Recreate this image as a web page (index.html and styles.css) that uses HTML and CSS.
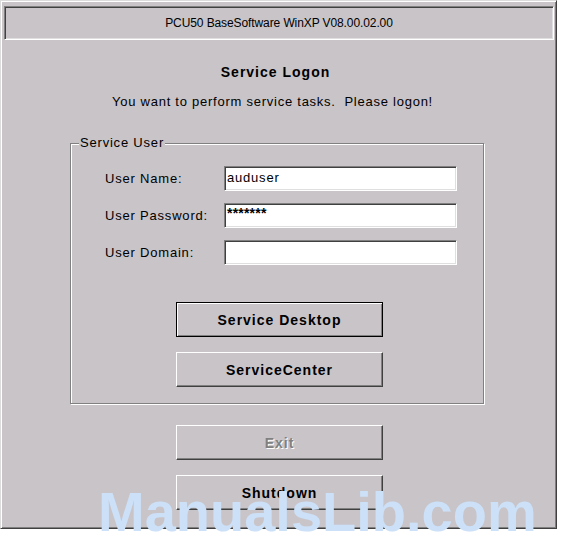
FILE: index.html
```html
<!DOCTYPE html>
<html>
<head>
<meta charset="utf-8">
<link rel="stylesheet" href="styles.css">
</head>
<body>
<div class="window">
  <div class="titlebar">PCU50 BaseSoftware WinXP V08.00.02.00</div>
  <div class="heading">Service Logon</div>
  <div class="subtitle">You want to perform service tasks.&nbsp; Please logon!</div>
  <div class="group">
    <span class="legend">Service User</span>
    <div class="fields">
      <div class="row"><span class="label">User Name:</span><div class="field">auduser</div></div>
      <div class="row"><span class="label">User Password:</span><div class="field pw">*******</div></div>
      <div class="row"><span class="label">User Domain:</span><div class="field"></div></div>
    </div>
    <div class="btn default first">Service Desktop</div>
    <div class="btn second">ServiceCenter</div>
  </div>
  <div class="btn outer-btn exit disabled">Exit</div>
  <div class="btn outer-btn shutdown">Shutdown</div>
</div>
<div class="watermark">ManualsLib.com</div>
</body>
</html>
```
FILE: styles.css
```css
html, body {
  margin: 0;
  padding: 0;
  background: #ffffff;
  overflow: hidden;
  height: 535px;
}
body {
  position: relative;
  font-family: "Liberation Sans", Arial, sans-serif;
  color: #000;
}
.window {
  box-sizing: border-box;
  width: 557px;
  height: 529px;
  background: #c8c4c8;
  border: 1px solid;
  border-color: #dcdcdc #404040 #404040 #dcdcdc;
  box-shadow: inset 1px 1px 0 #ffffff, inset -1px -1px 0 #808080;
  display: flex;
  flex-direction: column;
  align-items: flex-start;
  padding: 1px;
}
.titlebar {
  box-sizing: border-box;
  width: 550px;
  height: 34px;
  margin: 4px 0 0 2px;
  border: 1px solid;
  border-color: #808080 #ffffff #ffffff #808080;
  box-shadow: inset 1px 1px 0 #404040, inset -1px -1px 0 #dfdfdf;
  display: flex;
  align-items: center;
  justify-content: center;
  font-size: 12px;
  letter-spacing: -0.1px;
}
.heading {
  align-self: stretch;
  text-align: center;
  font-weight: bold;
  font-size: 14px;
  letter-spacing: 1px;
  line-height: 16px;
  margin-top: 24px;
  padding-right: 6px;
}
.subtitle {
  align-self: stretch;
  text-align: center;
  font-size: 13px;
  letter-spacing: 0.75px;
  line-height: 16px;
  margin-top: 14px;
  padding-right: 12px;
}
.group {
  box-sizing: border-box;
  width: 414px;
  height: 261px;
  margin: 33px 0 0 68px;
  border: 1px solid #808080;
  box-shadow: 1px 1px 0 #ffffff, inset 1px 1px 0 #ffffff;
  display: flex;
  flex-direction: column;
  align-items: flex-start;
}
.legend {
  font-size: 13px;
  letter-spacing: 0.8px;
  line-height: 16px;
  background: #c8c4c8;
  padding: 0 1px;
  margin: -9px 0 0 8px;
  height: 16px;
}
.fields {
  display: flex;
  flex-direction: column;
  gap: 12px;
  margin-top: 15px;
  padding-left: 34px;
}
.row {
  display: flex;
  align-items: center;
  height: 25px;
}
.label {
  width: 119px;
  font-size: 13px;
  letter-spacing: 0.8px;
}
.field {
  box-sizing: border-box;
  width: 233px;
  height: 25px;
  background: #ffffff;
  border: 1px solid;
  border-color: #808080 #ffffff #ffffff #808080;
  box-shadow: inset 1px 1px 0 #404040, inset -1px -1px 0 #dfdfdf;
  font-size: 13px;
  letter-spacing: 0.8px;
  line-height: 21px;
  padding-left: 2px;
}
.field.pw {
  font-weight: bold;
  font-size: 14px;
  line-height: 18px;
  letter-spacing: 0.2px;
}
.btn {
  box-sizing: border-box;
  width: 207px;
  height: 35px;
  border: 1px solid;
  border-color: #ffffff #404040 #404040 #ffffff;
  box-shadow: inset -1px -1px 0 #808080;
  display: flex;
  align-items: center;
  justify-content: center;
  font-weight: bold;
  font-size: 14px;
  letter-spacing: 1px;
}
.btn.default {
  border-color: #000000;
  box-shadow: inset 1px 1px 0 #ffffff, inset -1px -1px 0 #808080;
}
.group .btn {
  margin-left: 105px;
}
.btn.first {
  margin-top: 37px;
}
.btn.second {
  margin-top: 15px;
}
.outer-btn {
  margin-left: 174px;
}
.exit {
  margin-top: 21px;
}
.shutdown {
  margin-top: 15px;
}
.btn.disabled {
  color: #808080;
  text-shadow: 1px 1px 0 #ffffff;
}
.watermark {
  position: absolute;
  left: 98px;
  top: 484px;
  font-family: "Liberation Sans", Arial, sans-serif;
  font-weight: bold;
  font-size: 56px;
  line-height: 56px;
  color: #cce0f7;
  white-space: nowrap;
}
```
